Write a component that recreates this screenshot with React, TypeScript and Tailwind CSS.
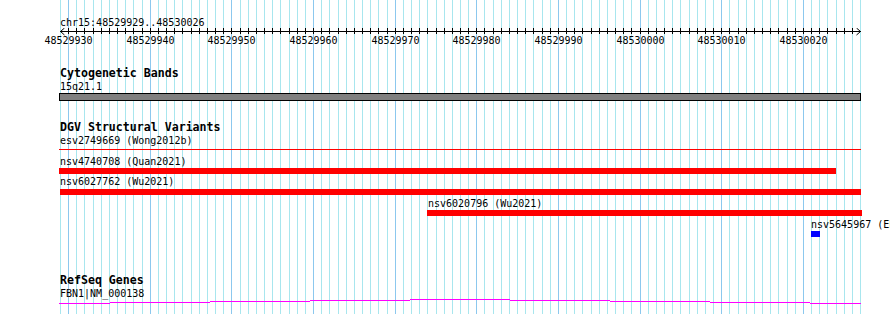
const START = 48529929;
const X0 = 60;
const PX = 800 / 98;
const xAt = (i: number) => Math.round(X0 + i * PX);
const bpIndex = Array.from({ length: 99 }, (_, i) => i);

const variants = [
  { label: "nsv4740708 (Quan2021)", labelCls: "mt-[5px] ml-[60px]", barCls: "ml-[59px] w-[777px] bg-[#ff0000]" },
  { label: "nsv6027762 (Wu2021)", labelCls: "mt-[1px] ml-[60px]", barCls: "mt-[1px] ml-[60px] w-[801px] bg-[#ff0000]" },
  { label: "nsv6020796 (Wu2021)", labelCls: "mt-[2px] ml-[428px]", barCls: "ml-[427px] w-[435px] bg-[#ff0000]" },
  { label: "nsv5645967 (Ebert2014)", labelCls: "mt-[2px] ml-[811px]", barCls: "ml-[811px] w-[9px] bg-[#0000ff]" },
];

const geneSteps = [
  [59, 110, 303], [110, 210, 302], [210, 310, 301], [310, 410, 300], [410, 510, 299],
  [510, 610, 300], [610, 710, 301], [710, 810, 302], [810, 861, 303],
];

function Grid() {
  return (
    <svg className="absolute inset-0" width={890} height={314}>
      {bpIndex.map((i) => {
        const major = (START + i) % 10 === 0;
        return (
          <line
            key={i}
            x1={xAt(i) + 0.5}
            x2={xAt(i) + 0.5}
            y1={0}
            y2={314}
            stroke={major ? "#8cc8ee" : "#a8e6ee"}
            strokeWidth={1}
          />
        );
      })}
    </svg>
  );
}

function Ruler() {
  return (
    <svg className="block" width={890} height={19}>
      <line x1={60} x2={861} y1={3.5} y2={3.5} stroke="black" />
      {bpIndex.slice(1, 98).map((i) => (
        <line key={i} x1={xAt(i) + 0.5} x2={xAt(i) + 0.5} y1={0} y2={6} stroke="black" />
      ))}
      <polyline points="64.5,0 60.5,3.5 64.5,7" fill="none" stroke="black" />
      <polyline points="856.5,0 860.5,3.5 856.5,7" fill="none" stroke="black" />
      {bpIndex
        .filter((i) => (START + i) % 10 === 0)
        .map((i) => (
          <text
            key={i}
            x={xAt(i) + 0.5}
            y={15.5}
            textAnchor="middle"
            fontFamily="'DejaVu Sans Mono', monospace"
            fontSize={10}
            fill="black"
          >
            {START + i}
          </text>
        ))}
    </svg>
  );
}

function TrackTitle({ children }: { children: string }) {
  return <div className="ml-[60px] h-[13px] text-[11.6px] font-bold leading-[13px]">{children}</div>;
}

export default function App() {
  return (
    <div className="relative w-[890px] h-[314px] overflow-hidden bg-white text-black font-['DejaVu_Sans_Mono',monospace]">
      <Grid />

      <div className="relative flex flex-col pt-[16px] text-[10px] leading-[13px] whitespace-nowrap">
        <div className="ml-[60px] h-[12px]">chr15:48529929..48530026</div>
        <Ruler />

        {/* Cytogenetic bands */}
        <div className="mt-[20px] flex flex-col">
          <TrackTitle>Cytogenetic Bands</TrackTitle>
          <div className="ml-[60px] h-[13px]">15q21.1</div>
          <div className="ml-[59px] w-[802px] h-[8px] border border-black bg-[#808080]" />
        </div>

        {/* DGV structural variants */}
        <div className="mt-[20px] flex flex-col">
          <TrackTitle>DGV Structural Variants</TrackTitle>
          <div className="ml-[60px] h-[13px]">esv2749669 (Wong2012b)</div>
          <div className="mt-[2px] ml-[59px] w-[802px] h-px bg-[#ff0000]" />
          {variants.map((v) => (
            <div key={v.label} className="flex flex-col">
              <div className={`h-[13px] ${v.labelCls}`}>{v.label}</div>
              <div className={`h-[6px] ${v.barCls}`} />
            </div>
          ))}
        </div>

        {/* RefSeq genes */}
        <div className="mt-[37px] flex flex-col">
          <TrackTitle>RefSeq Genes</TrackTitle>
          <div className="ml-[60px] h-[11px]">FBN1|NM_000138</div>
          <svg className="block" width={890} height={6}>
            {geneSteps.map(([a, b, y]) => (
              <rect key={a} x={a} y={y - 298} width={b - a} height={1} fill="#ff00ff" />
            ))}
          </svg>
        </div>
      </div>
    </div>
  );
}
